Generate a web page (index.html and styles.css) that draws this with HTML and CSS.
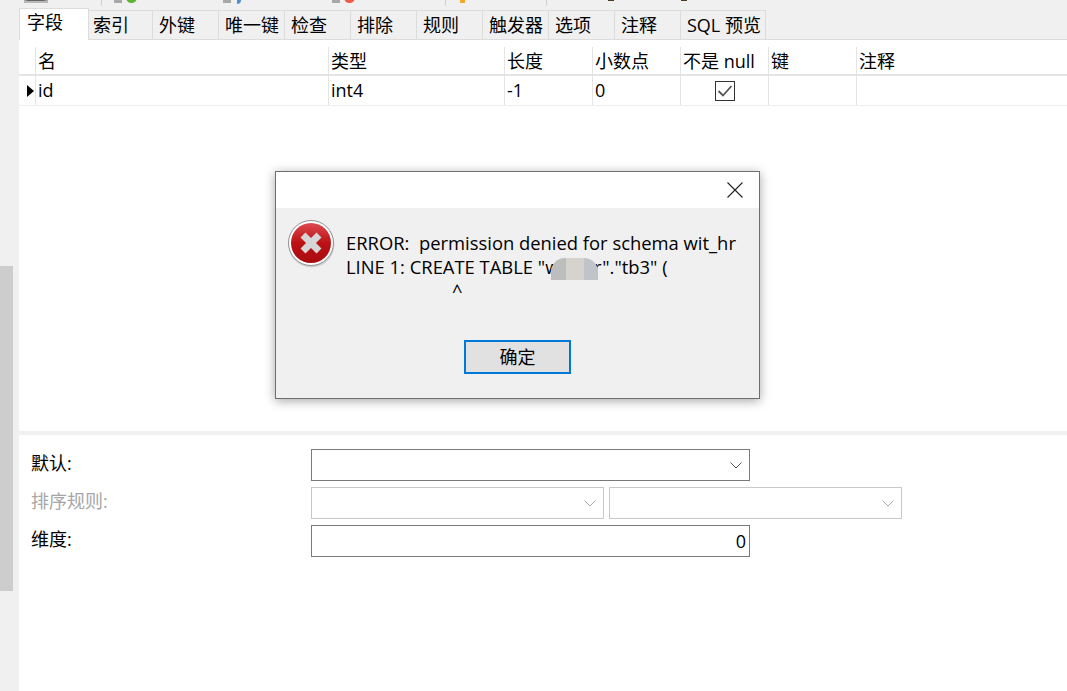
FILE: index.html
```html
<!DOCTYPE html>
<html lang="en">
<head>
    <meta charset="UTF-8">
    <title>Design table</title>
    <link rel="stylesheet" href="styles.css">
</head>

<body>
<div class="app">
    <div class="side">
        <div class="thumb"></div>
    </div>

    <div class="main">
        <div class="toolbar">
            <span class="tool-box"></span>
            <span class="sep sep1"></span>
            <span class="sq sq1"></span><span class="dot green"></span>
            <span class="sq sq2"></span><span class="dot blue"></span>
            <span class="sq sq3"></span><span class="dot red"></span>
            <span class="sep sep2"></span>
            <span class="orange"></span>
            <span class="sep sep3"></span>
            <span class="tick tick1"></span>
            <span class="tick tick2"></span>
        </div>

        <ul class="tabs">
            <li class="cur">字段</li>
            <li>索引</li>
            <li>外键</li>
            <li>唯一键</li>
            <li>检查</li>
            <li>排除</li>
            <li>规则</li>
            <li>触发器</li>
            <li>选项</li>
            <li>注释</li>
            <li class="wide">SQL 预览</li>
        </ul>

        <div class="grid head">
            <div class="mark"></div>
            <div>名</div>
            <div>类型</div>
            <div>长度</div>
            <div>小数点</div>
            <div>不是 null</div>
            <div>键</div>
            <div>注释</div>
        </div>
        <div class="grid row">
            <div class="mark"><span class="arrow"></span></div>
            <div>id</div>
            <div>int4</div>
            <div>-1</div>
            <div>0</div>
            <div class="center">
                <svg class="check" width="20" height="20" viewBox="0 0 20 20">
                    <rect x="0.5" y="0.5" width="19" height="19" fill="#fff" stroke="#333"/>
                    <path d="M3.5 10 L8 14.5 L16.5 5" fill="none" stroke="#555" stroke-width="1.8"/>
                </svg>
            </div>
            <div></div>
            <div></div>
        </div>

        <div class="blank"></div>

        <div class="props">
            <div class="prop">
                <label>默认:</label>
                <div class="select big">
                    <svg class="chev" width="12" height="7" viewBox="0 0 12 7"><path d="M0.5 0.5 L6 6 L11.5 0.5" fill="none" stroke="#555"/></svg>
                </div>
            </div>
            <div class="prop off">
                <label>排序规则:</label>
                <div class="select half">
                    <svg class="chev" width="12" height="7" viewBox="0 0 12 7"><path d="M0.5 0.5 L6 6 L11.5 0.5" fill="none" stroke="#aaa"/></svg>
                </div>
                <div class="select other">
                    <svg class="chev" width="12" height="7" viewBox="0 0 12 7"><path d="M0.5 0.5 L6 6 L11.5 0.5" fill="none" stroke="#aaa"/></svg>
                </div>
            </div>
            <div class="prop">
                <label>维度:</label>
                <div class="select big num">0</div>
            </div>
        </div>
    </div>
</div>

<div class="dialog">
    <div class="dialog-title">
        <svg width="16" height="16" viewBox="0 0 16 16"><path d="M0.5 0.5 L15.5 15.5 M15.5 0.5 L0.5 15.5" stroke="#222" stroke-width="1.1"/></svg>
    </div>
    <div class="dialog-body">
        <div class="message">
            <svg class="err" width="48" height="48" viewBox="0 0 48 48">
                <defs>
                    <linearGradient id="red" x1="0" y1="0" x2="0" y2="1">
                        <stop offset="0" stop-color="#dc4a50"/>
                        <stop offset="0.5" stop-color="#bb1116"/>
                        <stop offset="1" stop-color="#a90b0f"/>
                    </linearGradient>
                </defs>
                <circle cx="23.5" cy="24.5" r="23" fill="#000" opacity=".12"/>
                <circle cx="23" cy="23" r="22.5" fill="#fff" stroke="#8f8f8f"/>
                <circle cx="23" cy="23" r="20" fill="url(#red)"/>
                <path d="M15 15 L31 31 M31 15 L15 31" stroke="#d6d6d6" stroke-width="7"/>
            </svg>
            <p class="msg-text">ERROR:&nbsp; permission denied for schema wit_hr<br>LINE 1: CREATE TABLE "<span class="hidden-name">wit_hr</span>"."tb3" (<br><span class="caret">^</span></p>
            <div class="smudge"></div>
        </div>
        <div class="dialog-foot">
            <a href="javascript:;" class="ok">确定</a>
        </div>
    </div>
</div>
</body>
</html>
```

FILE: styles.css
```css
*{
    padding: 0;
    margin: 0;
    box-sizing: border-box;
}
html,body{
    height: 100%;
    overflow: hidden;
}
body{
    font-family: "Open Sans", "Noto Sans CJK SC", sans-serif;
    font-size: 18px;
    color: #000;
    background-color: #fff;
}
.app{
    display: flex;
    height: 691px;
}
.side{
    width: 19px;
    flex: none;
    background-color: #f0f0f0;
    padding-top: 266px;
}
.side .thumb{
    width: 13px;
    height: 325px;
    background-color: #cdcdcd;
}
.main{
    flex: 1;
    display: flex;
    flex-direction: column;
    min-width: 0;
}

/* toolbar, only its bottom edge is visible */
.toolbar{
    height: 10px;
    background-color: #f0f0f0;
    display: flex;
    align-items: flex-start;
    overflow: hidden;
}
.tool-box{
    margin-left: 5px;
    width: 24px;
    height: 3px;
    background-color: #b8b8b8;
    border-top: 1px solid #666;
    border-left: 4px solid #b8b8b8;
    border-right: 5px solid #b8b8b8;
}
.sep{
    width: 1px;
    height: 6px;
    background-color: #d0d0d0;
}
.sep1{ margin-left: 53px; }
.sep2{ margin-left: 90px; }
.sep3{ margin-left: 81px; }
.sq{
    width: 8px;
    height: 3px;
    background-color: #a8a8a8;
}
.sq1{ margin-left: 12px; }
.sq2{ margin-left: 86px; }
.sq3{ margin-left: 91px; }
.dot{
    width: 11px;
    height: 11px;
    margin-top: -8px;
    border-radius: 50%;
}
.green{ margin-left: 4px; background-color: #5cb531; }
.blue{ margin-left: 6px; width: 4px; height: 4px; margin-top: 0; border-radius: 0 0 4px 0; background-color: #4f8fd0; }
.red{ margin-left: 4px; background-color: #ec5a48; }
.orange{
    margin-left: 14px;
    width: 5px;
    height: 3px;
    background-color: #f0a92e;
}
.tick{
    width: 6px;
    height: 1px;
    background-color: #4a3a2a;
}
.tick1{ margin-left: 61px; }
.tick2{ margin-left: 67px; }

.tabs{
    list-style: none;
    display: flex;
    height: 30px;
    background-color: #f0f0f0;
    border-bottom: 1px solid #dcdcdc;
}
.tabs li{
    width: 66px;
    height: 29px;
    line-height: 29px;
    padding-left: 6px;
    background-color: #f0f0f0;
    border-top: 1px solid #dcdcdc;
    border-right: 1px solid #dcdcdc;
    white-space: nowrap;
}
.tabs .cur{
    width: 70px;
    height: 32px;
    margin-top: -2px;
    padding-left: 7px;
    line-height: 27px;
    background-color: #fff;
    border-left: 1px solid #dcdcdc;
}
.tabs .cur + li{
    width: 64px;
    padding-left: 4px;
}
.tabs .wide{
    width: 85px;
}

.grid{
    display: grid;
    grid-template-columns: 16px 293px 176px 88px 88px 88px 88px 1fr;
}
.grid > div{
    padding-left: 2px;
    border-left: 1px solid #e4e4e4;
    white-space: nowrap;
}
.grid .mark{
    border-left: none;
    padding-left: 0;
}
.head{
    height: 36px;
    padding-top: 7px;
    border-bottom: 2px solid #e4e4e4;
    line-height: 29px;
}
.row{
    height: 30px;
    border-bottom: 1px solid #eee;
    line-height: 29px;
}
.row .mark{
    padding: 9px 0 0 8px;
}
.arrow{
    display: block;
    width: 0;
    height: 0;
    border-style: solid;
    border-width: 6px 0 6px 7px;
    border-color: transparent transparent transparent #000;
}
.row .center{
    display: flex;
    justify-content: center;
    align-items: center;
    padding-left: 0;
}
.blank{
    height: 329px;
    border-bottom: 4px solid #f0f0f0;
}

.props{
    padding: 14px 0 0 12px;
    display: flex;
    flex-direction: column;
    gap: 6px;
}
.prop{
    display: flex;
    align-items: center;
    height: 32px;
}
.prop label{
    width: 280px;
    padding-bottom: 6px;
}
.select{
    height: 32px;
    border: 1px solid #7a7a7a;
    background-color: #fff;
    display: flex;
    align-items: center;
    justify-content: flex-end;
    padding-right: 7px;
}
.big{
    width: 439px;
}
.half{
    width: 293px;
}
.other{
    width: 293px;
    margin-left: 5px;
}
.num{
    padding-right: 3px;
}
.off label{
    color: #a6a6a6;
}
.off .select{
    border-color: #c8c8c8;
}

/* error dialog */
.dialog{
    position: absolute;
    left: 275px;
    top: 171px;
    width: 485px;
    height: 228px;
    border: 1px solid #6e6e6e;
    box-shadow: 0 2px 10px rgba(0,0,0,.35);
    display: flex;
    flex-direction: column;
}
.dialog-title{
    height: 36px;
    background-color: #fff;
    display: flex;
    justify-content: flex-end;
    padding: 10px 16px 0 0;
}
.dialog-body{
    flex: 1;
    background-color: #f0f0f0;
}
.message{
    position: relative;
    display: flex;
    height: 123px;
    padding: 12px 0 0 12px;
}
.msg-text{
    margin-left: 10px;
    padding-top: 11px;
    font-size: 18.4px;
    line-height: 24px;
    white-space: nowrap;
}
.hidden-name{
    letter-spacing: .8px;
}
.caret{
    padding-left: 106px;
}
.smudge{
    position: absolute;
    left: 275px;
    top: 50px;
    width: 47px;
    height: 22px;
    border-radius: 14px 14px 0 0;
    background: linear-gradient(90deg, #bdbdbd 0 32%, #d6d2ce 32% 70%, #c0c4c8 70%);
}
.dialog-foot{
    display: flex;
    justify-content: center;
    padding-top: 9px;
}
.ok{
    display: block;
    width: 107px;
    height: 34px;
    line-height: 30px;
    text-align: center;
    color: #000;
    text-decoration: none;
    background-color: #e1e1e1;
    border: 2px solid #0078d7;
}
```
